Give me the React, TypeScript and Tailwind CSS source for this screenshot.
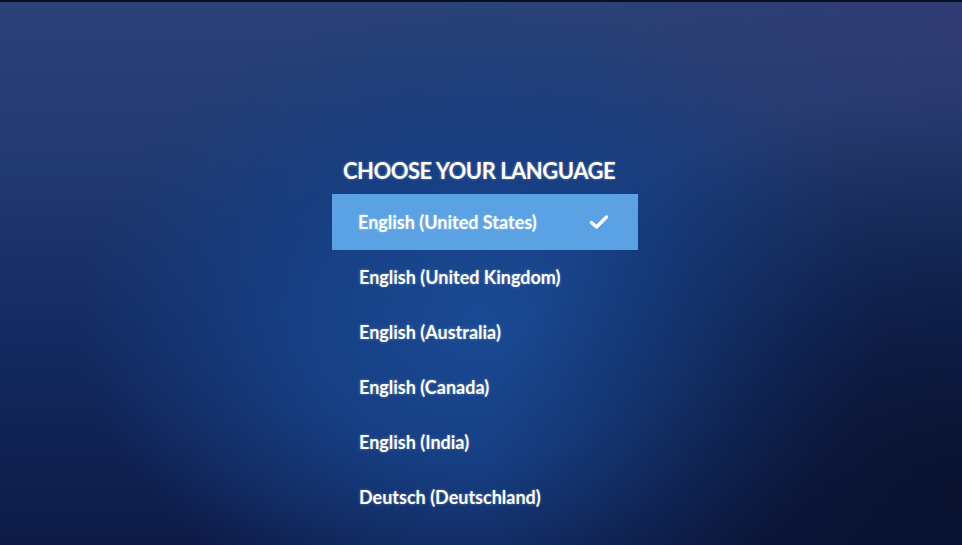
const languages = [
  "English (United States)",
  "English (United Kingdom)",
  "English (Australia)",
  "English (Canada)",
  "English (India)",
  "Deutsch (Deutschland)",
];

const Check = () => (
  <svg width="20" height="16" viewBox="0 0 20 16" fill="none" aria-hidden="true">
    <polyline
      points="2.5,8.5 7.5,13 17.5,3"
      stroke="white"
      strokeWidth="3.4"
      strokeLinecap="round"
      strokeLinejoin="round"
    />
  </svg>
);

export default function App() {
  const selected = 0;

  return (
    <main
      className="h-[545px] w-full overflow-hidden border-t-2 border-[#0a0e22]
      bg-[radial-gradient(ellipse_42%_58%_at_50%_58%,#1a4a94_0%,#173f84_45%,rgba(20,50,110,0)_100%),linear-gradient(180deg,#2a4277_0%,#213a70_30%,#132b62_60%,#0d1a46_100%)]
      font-['Lato','Noto_Sans',sans-serif] text-white"
    >
      <div className="h-full w-full bg-[radial-gradient(ellipse_50%_75%_at_100%_90%,rgba(8,14,40,0.8)_0%,rgba(8,14,40,0)_100%),radial-gradient(ellipse_40%_40%_at_100%_0%,rgba(60,50,110,0.4)_0%,rgba(60,50,110,0)_100%)]">
        <div className="ml-[332px] flex w-[306px] flex-col pt-[155px]">
          <h1 className="px-[11px] pb-[9px] text-[22px] leading-[28px] font-bold tracking-[-0.5px] uppercase [text-shadow:0_0_3px_rgba(255,255,255,0.35)]">
            Choose Your Language
          </h1>

          <ul className="flex flex-col">
            {languages.map((lang, i) => (
              <li
                key={lang}
                className={
                  i === selected
                    ? "flex h-[56px] items-center justify-between bg-[#5aa2e4] pr-[29px] pl-[26px]"
                    : "flex h-[55px] items-center pl-[27px]"
                }
              >
                <span className="text-[18px] font-bold [text-shadow:0_0_3px_rgba(255,255,255,0.35)]">
                  {lang}
                </span>
                {i === selected && <Check />}
              </li>
            ))}
          </ul>
        </div>
      </div>
    </main>
  );
}
